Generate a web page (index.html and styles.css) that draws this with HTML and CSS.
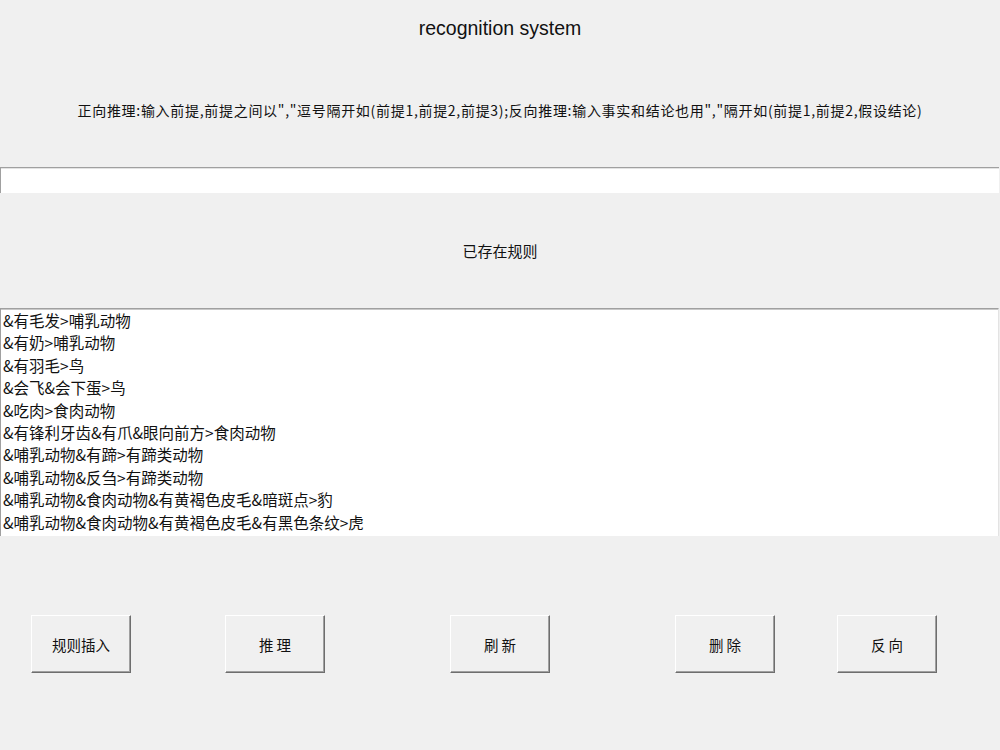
FILE: index.html
```html
<!DOCTYPE html>
<html lang="zh">
<head>
<meta charset="utf-8">
<title>recognition system</title>
<link rel="stylesheet" href="styles.css">
</head>
<body>
<div class="app">
  <header class="head">
    <h1 class="title">recognition system</h1>
    <p class="hint">正向推理:输入前提,前提之间以","逗号隔开如(前提1,前提2,前提3);反向推理:输入事实和结论也用","隔开如(前提1,前提2,假设结论)</p>
  </header>
  <div class="entry"></div>
  <div class="label">已存在规则</div>
  <div class="list">
    <div class="row">&amp;有毛发&gt;哺乳动物</div>
    <div class="row">&amp;有奶&gt;哺乳动物</div>
    <div class="row">&amp;有羽毛&gt;鸟</div>
    <div class="row">&amp;会飞&amp;会下蛋&gt;鸟</div>
    <div class="row">&amp;吃肉&gt;食肉动物</div>
    <div class="row">&amp;有锋利牙齿&amp;有爪&amp;眼向前方&gt;食肉动物</div>
    <div class="row">&amp;哺乳动物&amp;有蹄&gt;有蹄类动物</div>
    <div class="row">&amp;哺乳动物&amp;反刍&gt;有蹄类动物</div>
    <div class="row">&amp;哺乳动物&amp;食肉动物&amp;有黄褐色皮毛&amp;暗斑点&gt;豹</div>
    <div class="row">&amp;哺乳动物&amp;食肉动物&amp;有黄褐色皮毛&amp;有黑色条纹&gt;虎</div>
  </div>
  <div class="buttons">
    <button class="btn b1">规则插入</button>
    <button class="btn b2">推 理</button>
    <button class="btn b3">刷 新</button>
    <button class="btn b4">删 除</button>
    <button class="btn b5">反 向</button>
  </div>
</div>
</body>
</html>
```
FILE: styles.css
```css
html, body {
  margin: 0;
  padding: 0;
  background: #f0f0f0;
}
body {
  font-family: "Noto Sans CJK SC", "Liberation Sans", sans-serif;
  color: #000;
}
.app {
  width: 1000px;
  height: 750px;
  overflow: hidden;
}
.head {
  height: 167px;
  display: flex;
  flex-direction: column;
  align-items: center;
}
.title {
  margin: 17px 0 0;
  font-family: "Liberation Sans", sans-serif;
  font-weight: normal;
  font-size: 19.5px;
  line-height: 22px;
  color: #111;
}
.hint {
  margin: 61px 0 0;
  font-size: 14px;
  letter-spacing: 0.7px;
  line-height: 20px;
  white-space: nowrap;
  color: #111;
}
.entry {
  height: 25px;
  width: 998px;
  background: #fff;
  border-top: 1px solid #a0a0a0;
  border-left: 1px solid #a0a0a0;
  box-shadow: inset 0 1px 0 #e3e3e3;
}
.label {
  height: 115px;
  display: flex;
  align-items: center;
  justify-content: center;
  font-size: 15px;
  color: #111;
}
.list {
  box-sizing: border-box;
  height: 228px;
  width: 999px;
  background: #fff;
  border-top: 1px solid #a0a0a0;
  border-left: 1px solid #a0a0a0;
  border-right: 1px solid #e3e3e3;
  box-shadow: inset 0 1px 0 #c8c8c8;
  padding: 0 0 0 2px;
  overflow: hidden;
}
.row {
  font-size: 15.5px;
  line-height: 22.4px;
  white-space: nowrap;
  color: #111;
}
.buttons {
  display: flex;
  padding-top: 79px;
}
.btn {
  box-sizing: border-box;
  width: 100px;
  height: 58px;
  padding: 0;
  background: #f0f0f0;
  border: 1px solid;
  border-color: #fff #6e6e6e #6e6e6e #fff;
  box-shadow: inset -1px -1px 0 #a0a0a0;
  font-family: "Noto Sans CJK SC", sans-serif;
  font-size: 14.5px;
  color: #111;
}
.b1 { margin-left: 31px; }
.b2 { margin-left: 94px; }
.b3 { margin-left: 125px; }
.b4 { margin-left: 125px; }
.b5 { margin-left: 62px; }
```
